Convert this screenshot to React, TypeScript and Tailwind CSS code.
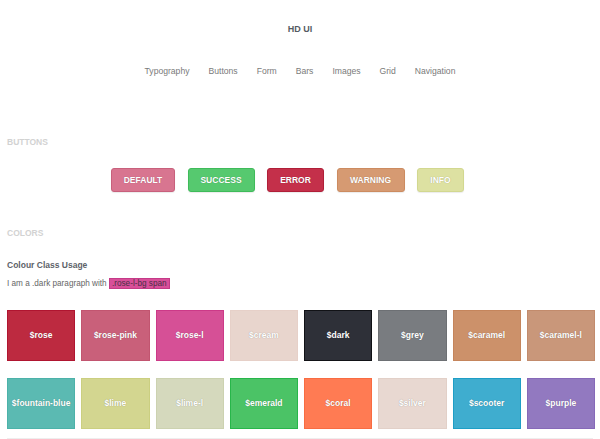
import React from "react";

const buttons = [
  { label: "DEFAULT", cls: "w-[64px] bg-[#d87590] border-[#c8607c]" },
  { label: "SUCCESS", cls: "w-[67px] bg-[#56c96f] border-[#3fbb5a]" },
  { label: "ERROR", cls: "w-[57px] bg-[#c4304a] border-[#b01f38]" },
  { label: "WARNING", cls: "w-[68px] bg-[#d69a72] border-[#cc8b60]" },
  { label: "INFO", cls: "w-[47px] bg-[#dde1a2] border-[#d2d890]" },
];

const row1 = [
  { label: "$rose", cls: "bg-[#bd2a40] border-[#b01530]" },
  { label: "$rose-pink", cls: "bg-[#c9607a] border-[#c25570]" },
  { label: "$rose-l", cls: "bg-[#d65096] border-[#cc3a88]" },
  { label: "$cream", cls: "bg-[#e8d5cd] border-[#e6d0c8]" },
  { label: "$dark", cls: "bg-[#2e3038] border-[#111216]" },
  { label: "$grey", cls: "bg-[#797c80] border-[#6d7074]" },
  { label: "$caramel", cls: "bg-[#cc916a] border-[#c5855c]" },
  { label: "$caramel-l", cls: "bg-[#c9977a] border-[#c28b6c]" },
];

const row2 = [
  { label: "$fountain-blue", cls: "bg-[#5bbab2] border-[#4cb2a9]" },
  { label: "$lime", cls: "bg-[#d3d690] border-[#cbcf80]" },
  { label: "$lime-l", cls: "bg-[#d5d9bd] border-[#ccd2b0]" },
  { label: "$emerald", cls: "bg-[#4bc366] border-[#27b64a]" },
  { label: "$coral", cls: "bg-[#ff7b53] border-[#f86c42]" },
  { label: "$silver", cls: "bg-[#e8d8d1] border-[#e2d0c8]" },
  { label: "$scooter", cls: "bg-[#3fadcf] border-[#1e9ec6]" },
  { label: "$purple", cls: "bg-[#9279c0] border-[#8669b8]" },
];

function Swatch({ label, cls }: { label: string; cls: string }) {
  return (
    <div
      className={`h-[51px] border flex items-center justify-center text-white font-bold text-[8.5px] [text-shadow:0_0_1px_rgba(0,0,0,0.35)] ${cls}`}
    >
      {label}
    </div>
  );
}

export default function App() {
  return (
    <div
      className="w-[600px] h-[439px] bg-white overflow-hidden"
      style={{ fontFamily: '"Liberation Sans", Arial, sans-serif' }}
    >
      <div className="pt-[23px] text-center text-[9px] leading-[12px] font-bold text-[#555b63]">
        HD UI
      </div>
      <nav className="mt-[30px] flex justify-center gap-[19px] text-[8.6px] leading-[12px] text-[#7a7a7a]">
        {["Typography", "Buttons", "Form", "Bars", "Images", "Grid", "Navigation"].map((n) => (
          <span key={n}>{n}</span>
        ))}
      </nav>

      <div className="mt-[59px] px-[7px] text-[8.5px] leading-[12px] font-bold text-[#d2d2d2]">
        BUTTONS
      </div>
      <div className="mt-[20px] pl-[111px] flex gap-[12.5px]">
        {buttons.map((b) => (
          <div
            key={b.label}
            className={`h-[24px] rounded-[3px] border flex items-center justify-center text-white font-bold text-[8.5px] [text-shadow:0_0_1px_rgba(0,0,0,0.3)] shadow-[0_1px_1px_rgba(0,0,0,0.08)] ${b.cls}`}
          >
            {b.label}
          </div>
        ))}
      </div>

      <div className="mt-[35px] px-[7px] text-[8.5px] leading-[12px] font-bold text-[#d2d2d2]">
        COLORS
      </div>
      <div className="mt-[20px] px-[7px] text-[8.5px] leading-[12px] font-bold text-[#5d6269]">
        Colour Class Usage
      </div>
      <div className="mt-[7px] px-[7px] text-[8.2px] leading-[12px] text-[#666]">
        I am a .dark paragraph with{" "}
        <span className="px-[2px] bg-[#d84f99] border border-[#c53a88] text-[#4a3046]">
          .rose-l-bg span
        </span>
      </div>

      <div className="mt-[20px] pl-[7px] pr-[5px] grid grid-cols-8 gap-x-[6px] gap-y-[17px]">
        {row1.map((s) => (
          <Swatch key={s.label} {...s} />
        ))}
        {row2.map((s) => (
          <Swatch key={s.label} {...s} />
        ))}
      </div>
      <div className="mt-[9px] mx-[7px] h-px bg-[#eeeeee]" />
    </div>
  );
}
